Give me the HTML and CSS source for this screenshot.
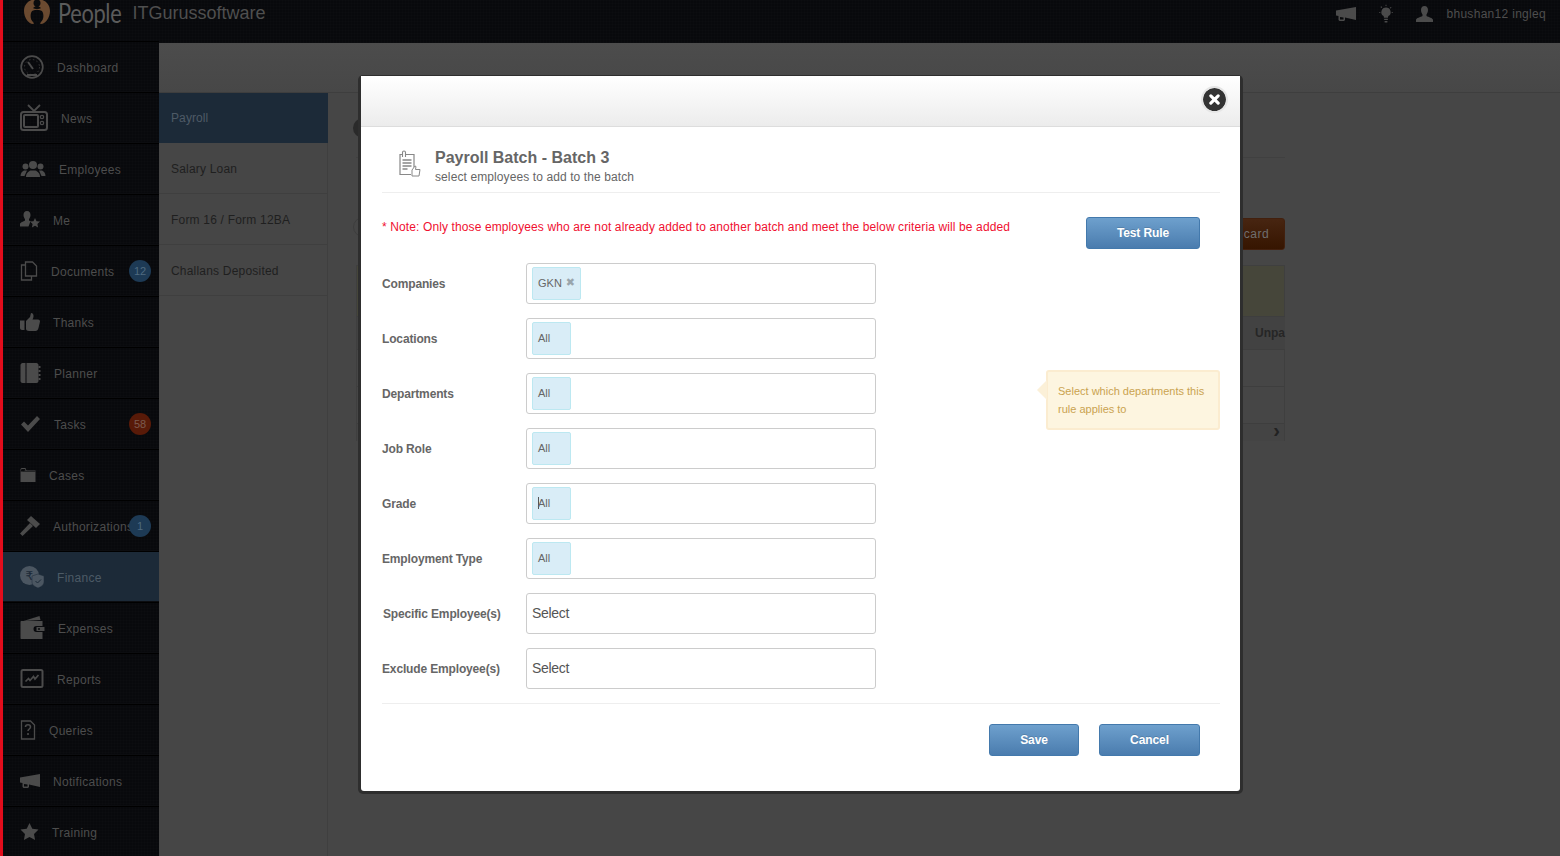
FILE: index.html
```html
<!DOCTYPE html>
<html lang="en">
<head>
<meta charset="utf-8">
<title>Payroll Batch</title>
<link rel="stylesheet" href="styles.css">
</head>
<body>
<svg class="defs" width="0" height="0" aria-hidden="true">
  <symbol id="megaphone" viewBox="0 0 20 14"><path d="M0 3.500L20 0v13L9 10.600v2.400l-1 1H3.500l-1-1V9L0 8.500z"/><path d="M4 10v2.500h3.500v-2z" fill="#0a0b0d"/></symbol>
</svg>
<header class="topbar">
  <div class="brand">
    <svg class="logo" width="26" height="25" viewBox="0 0 26 25"><path d="M13 0C19.500 0 26 4 26 12c0 7-5 13-9 13-1 0-1-1 0-2 2-2 3-5 2-9-1-3-3-3-6-3s-5 0-6 3c-1 4 0 7 2 9 1 1 1 2 0 2-4 0-9-6-9-13C0 4 6.500 0 13 0z" fill="#6b4a30"/><circle cx="13" cy="4" r="3.500" fill="#0a0b0d"/><path d="M9 9c2 1.500 6 1.500 8 0l-4-3z" fill="#0a0b0d"/></svg>
    <span class="brand-name">People</span>
    <span class="brand-org">ITGurussoftware</span>
  </div>
  <div class="top-tools">
    <svg width="20" height="14"><use href="#megaphone"/></svg>
    <svg class="tool-bulb" width="14" height="20" viewBox="0 0 15 20"><path d="M7.500 3a5 5 0 0 1 3 9c-.6.500-.8 1-.8 2H5.300c0-1-.2-1.500-.8-2a5 5 0 0 1 3-9z"/><path d="M5.500 15h4v1.500h-4zM6 17.500h3V19H6z"/><path d="M7 0h1v1.500H7zM1.500 2.500l1-.7 1 1-1 .7zM12.500 2.500l1 .6-1 1.100-1-.7zM0 8h1.500v1H0zM13.500 8H15v1h-1.500z"/></svg>
    <svg class="tool-user" width="17" height="16" viewBox="0 0 17 16"><path d="M8.500 0c2.500 0 3.500 2 3.500 4 0 2-1 4-1.500 4.500v1.500c2 1 6.500 2 6.500 4v2H0v-2c0-2 4.500-3 6.500-4V8.500C6 8 5 6 5 4c0-2 1-4 3.500-4z"/></svg>
    <span class="user-name">bhushan12 ingleq</span>
  </div>
</header>
<div class="shell">
  <nav class="sidenav">
    <a class="nav-item"><svg width="24" height="24" viewBox="0 0 24 24" fill="none" stroke="#4b4b4b"><circle cx="12" cy="12" r="10.800" stroke-width="1.700"/><circle cx="12" cy="12" r="7.500" stroke-width=".7" stroke-dasharray="1.500 2.500"/><path d="M8 7l5 7" stroke-width="2"/><path d="M7 20h10" stroke-width="2"/></svg><span>Dashboard</span></a>
    <a class="nav-item"><svg class="icon-tv" width="28" height="27" viewBox="0 0 28 27" fill="none" stroke="#4b4b4b"><path d="M8 1l6 6 6-6" stroke-width="1.800"/><rect x="1" y="8" width="26" height="18" rx="2.500" stroke-width="2"/><rect x="4" y="11" width="14" height="12" rx="1" stroke-width="2"/><circle cx="22" cy="13" r="1.700" stroke-width="1.200"/><circle cx="22" cy="19" r="1.700" stroke-width="1.200"/></svg><span>News</span></a>
    <a class="nav-item"><svg width="26" height="16" viewBox="0 0 25 16"><circle cx="12.500" cy="4" r="4"/><path d="M5.500 16c0-4 3-6 4.500-6.500h5c1.500.5 4.500 2.500 4.500 6.500z"/><circle cx="5" cy="5.500" r="3"/><path d="M0 15c0-3 2-5 3.500-5.500h3L4 15z"/><circle cx="20" cy="5.500" r="3"/><path d="M25 15c0-3-2-5-3.500-5.500h-3L21 15z"/></svg><span>Employees</span></a>
    <a class="nav-item"><svg width="20" height="17" viewBox="0 0 20 17"><path d="M7 0c2.500 0 3.500 2 3.500 4S9.500 7.500 9 8v1.500l1.500.8-2 5.200H0v-2.500c0-1.500 3.500-2.500 5-3.500V8c-.5-.5-1.500-2-1.500-4S4.500 0 7 0z"/><path d="M15 7l1.500 3.200 3.500.4-2.600 2.300.7 3.600-3.100-1.800-3.100 1.800.7-3.600-2.600-2.300 3.500-.4z"/></svg><span>Me</span></a>
    <a class="nav-item"><svg width="18" height="20" viewBox="0 0 17 20" fill="none" stroke="#4b4b4b" stroke-width="1.300"><path d="M5 1h7l4 4v10H5z"/><path d="M5 4H1v15h10v-4"/></svg><span>Documents</span><b class="badge badge-blue">12</b></a>
    <a class="nav-item"><svg width="20" height="18" viewBox="0 0 20 18"><path d="M0 7.500h4.500V17H2c-1 0-2-.7-2-2z"/><path d="M6 8l4-4 1-4c2 0 2.500 1.500 2.500 3s-.5 2.500-1 3.500H18c1.500 0 2 1 2 2L18.500 15c-.5 2-1.500 3-3 3H9c-1.500 0-3-1-3-2z"/></svg><span>Thanks</span></a>
    <a class="nav-item"><svg width="21" height="20" viewBox="0 0 20 20"><path d="M2 0h3v20H2c-1 0-2-1-2-2V2c0-1 1-2 2-2z"/><path d="M6 0h10c1 0 2 1 2 2v16c0 1-1 2-2 2H6z"/><path d="M18 3h2v2h-2zM18 7h2v2h-2zM18 11h2v2h-2zM18 15h2v2h-2z"/></svg><span>Planner</span></a>
    <a class="nav-item"><svg width="21" height="16" viewBox="0 0 19 16"><path d="M0 8.500l3-3 4 4L16 0l3 3L7 16z"/></svg><span>Tasks</span><b class="badge badge-red">58</b></a>
    <a class="nav-item"><svg width="16" height="14" viewBox="0 0 15 14"><path d="M0 3V14h15V2.500H6L5 0H1L0 1z"/><path d="M1.500 3.500H0L1 1h3.500l.7 1.500z" fill="#0a0b0d"/><path d="M2 3h13v1H2z" fill="#0a0b0d" opacity=".6"/></svg><span>Cases</span></a>
    <a class="nav-item"><svg width="20" height="20" viewBox="0 0 20 20"><path d="M11 0l9 8-4 4-9-8z"/><path d="M10 7l3 3L2.500 20 0 17.500z"/></svg><span>Authorizations</span><b class="badge badge-blue">1</b></a>
    <a class="nav-item is-active"><svg width="24" height="22" viewBox="0 0 24 22"><circle cx="9.500" cy="9.500" r="9.500"/><text x="9.500" y="14" class="rupee">₹</text><path d="M18 8l6 2v6c0 3-3 5-6 6-3-1-6-3-6-6v-6z" stroke="#1c2a38" stroke-width=".5"/><path d="M15.500 15l2 2 3.500-3.500" fill="none" stroke="#1c2a38"/></svg><span>Finance</span></a>
    <a class="nav-item"><svg width="25" height="25" viewBox="0 0 24 25"><path d="M3 6l16-5 1 4z"/><path d="M1 6h21v5h-6c-2 0-3 1-3 3s1 3 3 3h6v7H1c-.6 0-1-.4-1-1V7c0-.6.4-1 1-1z"/><path d="M16 12h8v4h-8z"/><circle cx="18.500" cy="14" r="1" fill="#0a0b0d"/></svg><span>Expenses</span></a>
    <a class="nav-item"><svg width="24" height="19" viewBox="0 0 23 19" fill="none" stroke="#4b4b4b"><rect x="1" y="1" width="21" height="17" rx="1.500" stroke-width="2"/><path d="M5 12.500l3-3 1.500 2L13 7.500l1.500 2.500L18 6" stroke-width="1.700"/></svg><span>Reports</span></a>
    <a class="nav-item"><svg width="16" height="20" viewBox="0 0 15 20" fill="none" stroke="#4b4b4b" stroke-width="1.300"><path d="M1 1h9l4 4v14H1z"/><path d="M5 7c0-3 5-3 5 0 0 2-2.500 2-2.500 4M7.500 13v2" stroke-width="1.600"/></svg><span>Queries</span></a>
    <a class="nav-item"><svg width="20" height="14"><use href="#megaphone"/></svg><span>Notifications</span></a>
    <a class="nav-item"><svg width="19" height="17" viewBox="0 0 18 17"><path d="M9 0l2.800 5.700 6.200.8-4.500 4.400 1.100 6.100L9 14.100 3.400 17l1.100-6.100L0 6.500l6.200-.8z"/></svg><span>Training</span></a>
  </nav>
  <div class="workspace">
    <div class="crumbbar"></div>
    <div class="work-body">
      <aside class="subnav">
        <a class="sub-item is-active">Payroll</a>
        <a class="sub-item">Salary Loan</a>
        <a class="sub-item">Form 16 / Form 12BA</a>
        <a class="sub-item">Challans Deposited</a>
      </aside>
      <main class="content">
        <div class="content-head"><i class="ghost-dot"></i></div>
        <div class="action-row"><i class="ghost-ring"></i><button class="discard">Discard</button></div>
        <section class="grid-box">
          <div class="grid-banner"></div>
          <div class="grid-head">Unpa</div>
          <div class="grid-row"></div>
          <div class="grid-row"></div>
          <div class="grid-scroll">›</div>
        </section>
      </main>
    </div>
  </div>
</div>

<div class="modal">
  <div class="modal-top"><button class="modal-close" aria-label="Close"><svg width="11" height="11" viewBox="0 0 12 12"><path d="M2 2l8 8M10 2l-8 8" stroke="#fff" stroke-width="3.400" stroke-linecap="round"/></svg></button></div>
  <div class="modal-body">
    <div class="title-row">
      <svg class="title-icon" width="23" height="28" viewBox="0 0 23 28" fill="none" stroke="#888"><path d="M4.500 4.500H2v20h11" stroke-width="1.200"/><path d="M8 4.500h8v13" stroke-width="1.200"/><path d="M4.500 7V2.500a1.500 1.500 0 0 1 3 0V7" stroke-width="1.100"/><path d="M4.500 10h9M4.500 13h9M4.500 16h9M4.500 19h5" stroke-width="1.300"/><path d="M14 20l3-4 1 .5-.5 3h4.500l-1 6.500h-7z" fill="#fff" stroke-width="1"/></svg>
      <div class="title-text">
        <h1>Payroll Batch - Batch 3</h1>
        <p>select employees to add to the batch</p>
      </div>
    </div>
    <div class="note-row">
      <p class="note">* Note: Only those employees who are not already added to another batch and meet the below criteria will be added</p>
      <button class="btn btn-test">Test Rule</button>
    </div>
    <form class="rule-form">
      <div class="field"><label>Companies</label><div class="tagbox"><span class="tag">GKN <i class="tag-x">✖</i></span></div></div>
      <div class="field"><label>Locations</label><div class="tagbox"><span class="tag">All</span></div></div>
      <div class="field"><label>Departments</label><div class="tagbox"><span class="tag">All</span></div></div>
      <div class="field"><label>Job Role</label><div class="tagbox"><span class="tag">All</span></div></div>
      <div class="field"><label>Grade</label><div class="tagbox"><span class="tag"><i class="caret"></i>All</span></div></div>
      <div class="field"><label>Employment Type</label><div class="tagbox"><span class="tag">All</span></div></div>
      <div class="field"><label class="label-nudge">Specific Employee(s)</label><div class="tagbox is-empty">Select</div></div>
      <div class="field"><label>Exclude Employee(s)</label><div class="tagbox is-empty">Select</div></div>
      <div class="hint">Select which departments this rule applies to</div>
    </form>
    <div class="modal-foot">
      <button class="btn btn-save">Save</button>
      <button class="btn btn-cancel">Cancel</button>
    </div>
  </div>
</div>
</body>
</html>
```
FILE: styles.css
```css
* { box-sizing: border-box; }
html, body { margin: 0; height: 100%; }
body {
  width: 1560px;
  height: 856px;
  overflow: hidden;
  display: flex;
  flex-direction: column;
  position: relative;
  font-family: "Liberation Sans", Arial, sans-serif;
  font-size: 12px;
  background: #464646;
  border-left: 3px solid #e30d1c;
}
.defs { position: absolute; }

/* top bar */
.topbar {
  flex: 0 0 43px;
  display: flex;
  justify-content: space-between;
  align-items: flex-start;
  fill: #4b4b4b;
  background-color: #08090c;
  background-image: linear-gradient(rgba(255,255,255,.008) 1px, transparent 1px), linear-gradient(90deg, rgba(255,255,255,.008) 1px, transparent 1px);
  background-size: 3px 3px;
}
.brand { display: flex; align-items: center; height: 26px; padding-left: 21px; }
.logo { margin-top: -4px; }
.brand-name {
  display: inline-block;
  margin: 0 -12px 0 8px;
  font-family: Lato, sans-serif;
  font-size: 26px;
  line-height: 26px;
  color: #5b5b5b;
  letter-spacing: -.4px;
  transform: scaleX(.84);
  transform-origin: left center;
}
.brand-org { margin-left: 11px; font-size: 18px; color: #4f4f4f; }
.top-tools { display: flex; align-items: center; height: 28px; padding-right: 14px; }
.tool-bulb { margin-left: 23px; }
.tool-user { margin-left: 23px; }
.user-name { margin-left: 13px; color: #4e4e4e; letter-spacing: .3px; }

.shell { flex: 1; display: flex; min-height: 0; }

/* side nav */
.sidenav {
  flex: 0 0 156px;
  margin-top: -2px;
  fill: #4b4b4b;
  background-color: #08090c;
  background-image: linear-gradient(rgba(255,255,255,.008) 1px, transparent 1px), linear-gradient(90deg, rgba(255,255,255,.008) 1px, transparent 1px);
  background-size: 3px 3px;
}
.nav-item {
  position: relative;
  height: 51px;
  display: flex;
  align-items: center;
  gap: 13px;
  padding-left: 17px;
  color: #4d4d4d;
  letter-spacing: .3px;
  border-top: 1px solid #000;
  border-bottom: 1px solid #0c0d10;
}
.nav-item svg { flex: none; }
.nav-item span { white-space: nowrap; position: relative; top: 1px; }
.nav-item.is-active { background: #1c2a38; color: #4c5a66; }
.nav-item.is-active svg { fill: #4b5661; }
.rupee { font-size: 12px; fill: #1c2a38; text-anchor: middle; font-family: "DejaVu Sans", sans-serif; }
.badge {
  position: absolute;
  right: 8px;
  top: 14px;
  width: 22px;
  height: 22px;
  border-radius: 50%;
  text-align: center;
  font-weight: normal;
  font-size: 11px;
  line-height: 22px;
  letter-spacing: 0;
}
.badge-blue { background: #1d3a55; color: #4f6a80; }
.badge-red { background: #581a08; color: #7c5a50; }

/* page behind the dialog */
.workspace { flex: 1; display: flex; flex-direction: column; min-width: 0; }
.crumbbar { flex: 0 0 50px; background: linear-gradient(#4c4c4c, #474747); border-bottom: 1px solid #3e3e3e; }
.work-body { flex: 1; display: flex; min-height: 0; }
.subnav { flex: 0 0 169px; border-right: 1px solid #3f3f3f; }
.sub-item {
  display: flex;
  align-items: center;
  height: 51px;
  padding: 2px 0 0 12px;
  color: #1f1f1f;
  letter-spacing: .2px;
  border-bottom: 1px solid #3f3f3f;
}
.sub-item.is-active { height: 50px; margin-right: -1px; padding-top: 0; background: #1c2a38; color: #4e5a66; border-bottom: 0; letter-spacing: .1px; }
.content { width: 957px; padding-left: 28px; }
.content-head { height: 65px; border-bottom: 1px solid #404040; position: relative; }
.ghost-dot { position: absolute; left: -3px; top: 25px; width: 20px; height: 20px; border-radius: 50%; background: #2a2a2a; }
.action-row { margin-top: 60px; height: 32px; display: flex; justify-content: flex-end; position: relative; }
.ghost-ring { position: absolute; left: -3px; top: -1px; width: 20px; height: 20px; border-radius: 50%; border: 1px solid #3d3d3d; }
.discard {
  width: 90px;
  height: 32px;
  border: 1px solid #42200e;
  border-radius: 3px;
  background: linear-gradient(#472511, #361500);
  color: #6f6f6f;
  font: 12px "Liberation Sans", Arial, sans-serif;
  letter-spacing: .5px;
  padding-left: 20px;
}
.grid-box { margin-top: 15px; height: 176px; border: 1px solid #3f3f3f; }
.grid-banner { height: 50px; background: #46463a; }
.grid-head { height: 34px; margin-right: -1px; background: #424242; border-top: 1px solid #3e3e3e; border-bottom: 1px solid #3e3e3e; text-align: right; line-height: 32px; font-weight: bold; color: #262626; }
.grid-row { height: 37px; border-bottom: 1px solid #3e3e3e; }
.grid-scroll { height: 17px; text-align: right; padding-right: 4px; line-height: 13px; font-size: 20px; font-weight: bold; color: #222; background: #444; }

/* dialog */
.modal {
  position: absolute;
  left: 358px;
  top: 76px;
  width: 879px;
  height: 715px;
  background: #fff;
  border-radius: 3px;
  box-shadow: -1px 1px 0 2px #2e2e2e, 1px 1px 0 2px #2e2e2e;
}
.modal-top {
  height: 51px;
  display: flex;
  justify-content: flex-end;
  padding: 10px 12px 0 0;
  background: linear-gradient(#fff, #ececec);
  border-bottom: 1px solid #ddd;
}
.modal-close {
  width: 27px;
  height: 27px;
  padding: 0;
  display: flex;
  align-items: center;
  justify-content: center;
  border: 2px solid #e6e6e6;
  border-radius: 50%;
  background: #333;
  background-clip: padding-box;
}
.modal-body { padding: 0 20px 0 21px; }
.title-row {
  height: 66px;
  display: flex;
  align-items: flex-start;
  padding: 22px 0 0 16px;
  border-bottom: 1px solid #eee;
  color: #666;
}
.title-icon { margin-right: 14px; margin-top: 1px; }
.title-text h1 { margin: 0; font-size: 16px; line-height: 18px; font-weight: bold; color: #666; }
.title-text p { margin: 3px 0 0; font-size: 12px; line-height: 14px; letter-spacing: .1px; }
.note-row { display: flex; justify-content: space-between; align-items: flex-start; height: 70px; padding: 24px 20px 0 0; }
.note { margin: 3px 0 0; color: #f01030; font-size: 12px; line-height: 14px; letter-spacing: .115px; }

.btn {
  height: 32px;
  border: 1px solid #4379ac;
  border-radius: 3px;
  background: linear-gradient(#6ea0cd, #4a7cae);
  color: #fff;
  font: bold 12px "Liberation Sans", Arial, sans-serif;
  letter-spacing: -.1px;
  text-shadow: 0 -1px 0 rgba(0,0,0,.15);
  padding: 0;
}
.btn-test { width: 114px; }
.btn-save { width: 90px; }
.btn-cancel { width: 101px; }

.rule-form { position: relative; display: flex; flex-direction: column; gap: 14px; padding-bottom: 14px; border-bottom: 1px solid #eee; }
.field { display: flex; align-items: center; height: 41px; }
.field label { flex: 0 0 144px; font-weight: bold; color: #666; letter-spacing: -.15px; }
.field .label-nudge { padding-left: 1px; }
.tagbox {
  width: 350px;
  height: 41px;
  display: flex;
  align-items: center;
  padding-left: 5px;
  border: 1px solid #ccc;
  border-radius: 3px;
  background: #fff;
}
.tagbox.is-empty { padding-bottom: 2px; font-size: 14px; color: #555; letter-spacing: -.3px; }
.tag {
  height: 33px;
  min-width: 39px;
  display: flex;
  align-items: center;
  padding: 0 5px 2px 5px;
  font-size: 11px;
  color: #666;
  background: #d9edf7;
  border: 1px solid #bce8f1;
  border-radius: 2px;
}
.tag-x { font-style: normal; font-size: 11px; color: #99a5ad; margin-left: 4px; font-family: "DejaVu Sans", sans-serif; }
.caret { width: 1px; height: 12px; background: #555; margin-right: -1px; }
.hint {
  position: absolute;
  left: 664px;
  top: 107px;
  width: 174px;
  height: 60px;
  padding: 10px 10px 0 10px;
  font-size: 11px;
  line-height: 18px;
  color: #caa350;
  background: #fdf5e0;
  border: 2px solid #fbecd0;
  border-radius: 3px;
}
.hint::before {
  content: "";
  position: absolute;
  left: -11px;
  top: 8px;
  border: 10px solid transparent;
  border-left: 0;
  border-right-color: #fbf0d8;
}
.modal-foot { display: flex; justify-content: flex-end; gap: 20px; padding: 20px 20px 0 0; }
```
